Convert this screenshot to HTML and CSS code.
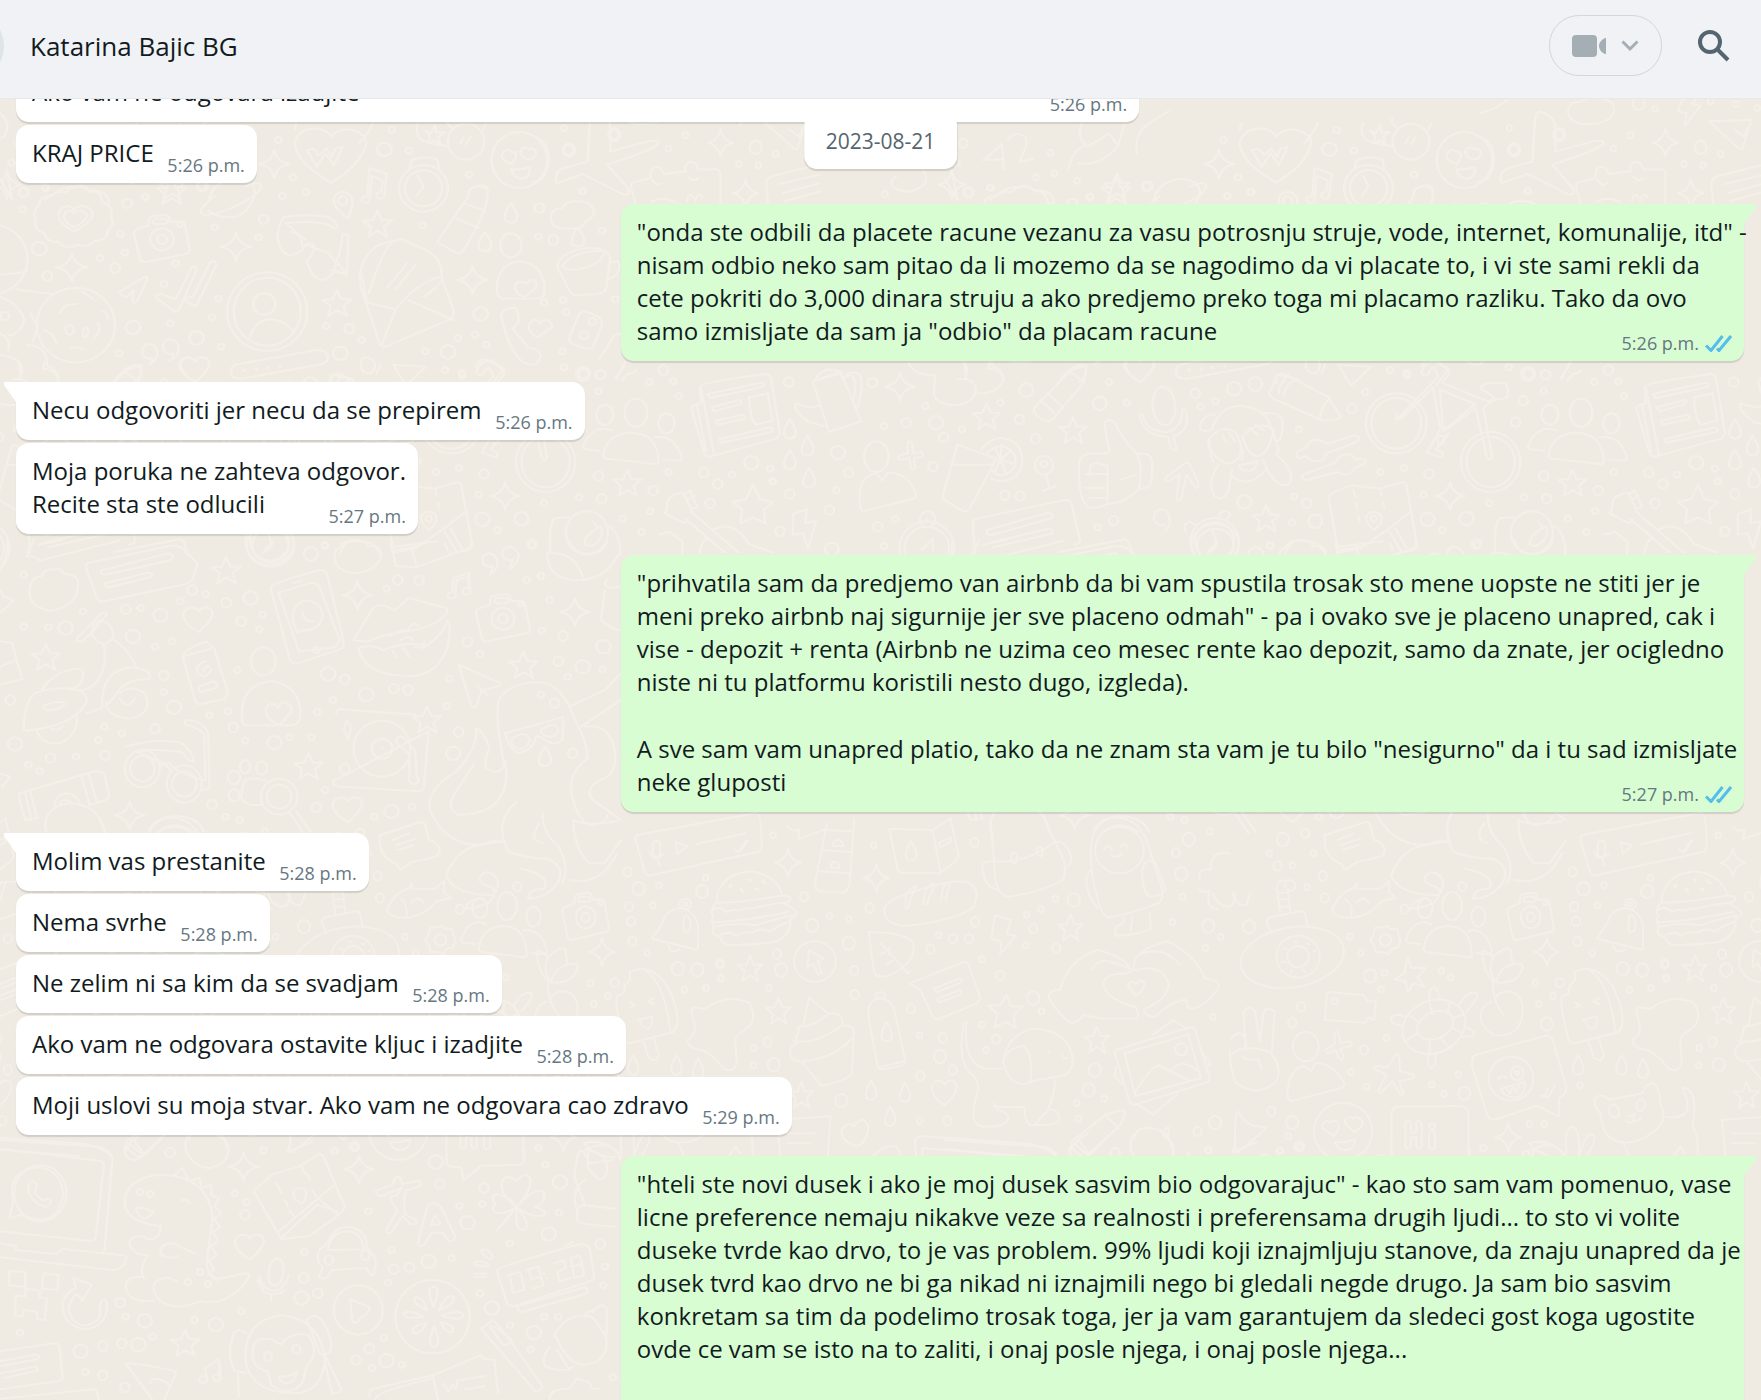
FILE: index.html
```html
<!DOCTYPE html>
<html lang="sr-Latn">
<head>
<meta charset="utf-8">
<meta name="viewport" content="width=device-width, initial-scale=1">
<title>Katarina Bajic BG</title>
<link rel="stylesheet" href="styles.css">
</head>
<body>
<header class="topbar">
  <span class="avatar"></span>
  <h1 class="contact">Katarina Bajic BG</h1>
  <button class="call" type="button" aria-label="Video call">
    <svg class="call-camera" viewBox="0 0 34 22" aria-hidden="true"><rect width="25" height="22" rx="4"/><path d="M34 3.500v15q0 1-1 .6-6-3.100-6-8.100t6-8.100q1-.4 1 .6z"/></svg>
    <svg class="call-arrow" viewBox="0 0 18 12" aria-hidden="true"><path d="M1.500 1.500 9 9l7.500-7.500"/></svg>
  </button>
  <button class="search" type="button" aria-label="Search">
    <svg viewBox="0 0 32 32" aria-hidden="true"><circle cx="12" cy="12" r="10"/><path d="m19 19 11 11"/></svg>
  </button>
</header>

<main class="chat">
  <svg class="wallpaper" aria-hidden="true">
    <defs>
      <g class="ink">
        <marker id="s" markerUnits="userSpaceOnUse" markerWidth="1" markerHeight="1" overflow="visible"><ellipse rx="8" ry="9"/></marker>
        <marker id="m" markerUnits="userSpaceOnUse" markerWidth="1" markerHeight="1" overflow="visible"><ellipse rx="12" ry="14"/></marker>
        <marker id="l" markerUnits="userSpaceOnUse" markerWidth="1" markerHeight="1" overflow="visible"><ellipse rx="18" ry="20"/></marker>
        <marker id="st" markerUnits="userSpaceOnUse" markerWidth="1" markerHeight="1" overflow="visible"><path d="M0-40 11-12 36-12 16 8 24 38 0 20-22 38-16 8-36-10-11-12z"/></marker>
        <marker id="sp" markerUnits="userSpaceOnUse" markerWidth="1" markerHeight="1" overflow="visible"><path d="M0-42Q6-6 38 0 6 6 0 42-6 6-38 0-6-6 0-42z"/></marker>
        <marker id="h" markerUnits="userSpaceOnUse" markerWidth="1" markerHeight="1" overflow="visible"><path d="M0-22C12-46 46-32 32-2Q24 18 0 40-34 18-38-6C-40-38-8-40 0-22z"/></marker>
        <marker id="dr" markerUnits="userSpaceOnUse" markerWidth="1" markerHeight="1" overflow="visible"><path d="M0-30Q16-4 16 10 14 28 0 28-16 26-15 10-14-6 0-30z"/></marker>
      </g>
      <g id="camera"><path d="M-62-30q-8 4-6 16l14 72q3 12 14 10l98-24q12-3 10-14l-12-74q-3-12-14-10l-20 2q-6-24-16-22l-30 5q-10 2-8 26z"/><ellipse rx="29" ry="33"/><ellipse rx="12" ry="14"/><rect x="-22" y="-62" width="36" height="16" rx="8"/><ellipse cx="44" cy="-44" rx="6" ry="7"/></g>
      <g id="people"><ellipse cx="0" cy="-82" rx="29" ry="42"/><path d="M-84 48Q-76-18-16-22 56-22 58 64q0 10-10 8l-122-16q-10-2-10-8z"/><ellipse cx="-80" cy="-76" rx="22" ry="30"/><ellipse cx="78" cy="-50" rx="21" ry="30"/><path d="M-62-28q-50-22-74 46 0 10 8 10l34 4M48-8q52-10 70 62 0 8-8 8l-38-2"/></g>
      <g id="smile"><ellipse rx="68" ry="84"/><path d="M-18-24c-12-16-32 4-22 20q6 10 22 16 10-18 10-28-2-10-10-8zM24-32c-10-14-26 0-20 16 6 10 16 14 26 14 8-8 14-20 8-28q-6-8-14-2zM-20 28q20 2 46-6 0 34-20 34-20-2-26-28z"/></g>
      <g id="plane"><path d="M-90 108q-8 2-6-16 2-24 26-30l52-18 6-126q4-30 20-20 30 14 30 50l0 66 100-32q22-4 16 12-8 10-60 34l-64 26 52 72q6 22-14 16l-98-60z"/></g>
      <g id="tile" class="ink">
        <!-- top left: medals, camera, planet, envelope -->
        <g transform="translate(0 100) scale(.408 .3333)">
          <path d="M182 260q25-10 38 14 30 0 30 32 32 14 22 42 12 24-8 44-2 32-32 30-16 24-42 12-26 18-46-8-32 2-36-28-28-12-20-38-12-28 8-42 0-34 32-30 18-28 54-28z"/>
          <path d="M182 330c14-24 50-10 44 20q-8 22-44 44-34-18-38-44c-2-30 26-42 38-20zM182 340c10-14 34-6 30 12q-6 16-30 30-22-12-26-30c0-20 18-26 26-12z"/>
          <use href="#camera" x="397" y="418"/>
          <path d="M512 300q10-60 72-64 46 10 40 50-20 66-60 66-40-2-52-20M526 288q-40 40-32 52 10 14 70-14 78-44 76-70-4-14-40 4"/>
          <path d="M812 248Q728 190 722 130c6-50 70-60 90-20 26-40 84-20 86 20q-14 66-86 118zM722 90l4-20M880 130q24-30 34-62M752 150l24 50 22-40 20 36 22-56-18 6-8 24-14-24-18 20-14-20z"/>
          <ellipse cx="1142" cy="125" rx="45" ry="54"/><path d="M1128 132l8-20M1142 134l12-24M1110 86q-20-20-14-30M1024 70q-8 30 8 50 30 14 64 18M1184 90l8-20M1042 90l14 10 10-26 4 24 20-2-16 16 6 20-16-12-14 10 4-20z"/>
          <ellipse cx="1038" cy="265" rx="60" ry="70"/><ellipse cx="1038" cy="265" rx="46" ry="54"/><path d="M1024 226l14 34-16 26M1004 206l4-24q26-16 64-4l4 26"/>
          <path d="M900 290a10 10 0 1 0 6 8l6-70 26 14-4 34a10 10 0 1 0 8 8l6-62-42-18z"/>
          <path d="M854 356q-34-30-36-52 0-28 22-28 26 2 24 36z"/><ellipse cx="840" cy="302" rx="11" ry="13"/>
          <path d="M1074 420l76-134q-6-20 20-28 30 4 26 24-4 60-60 168-6 14-18 8l-38-26q-10-4-6-12zM1118 356l56 28M1138 310l52 22M1170 258q6-6 26 4"/><use href="#smile" x="1273" y="180"/><use href="#plane" x="1458" y="140"/>
          <path d="M694 352q-12 26-14 60 8 50 32 54 26-4 38-34l18-2q6 26-16 52 10 54 40 58 26-10 32-50l-18-30-56-26M694 352q60-12 112 0 22 14 20 30-6 10-18-6-40-18-108-6l50 50M850 524l4-112q-2-12-14-10l-8 60-8 20zM712 396q30 6 28 40M810 510l38 12"/>
          <path d="M884 510q14-70 66-84l36-8 60 34q40 24 36 78l30 104q2 16-10 24l-152 80q-14 6-20-8l-46-170q-4-30 0-50zM884 510l16 98 70 20q50-80 112-98M970 628l-36 110M1000 600l110 60M904 580q30-120 56-152M950 562l48-72M968 570l52-78M1040 590q34-30 44-50"/>
          <ellipse cx="655" cy="635" rx="98" ry="118"/><ellipse cx="655" cy="635" rx="82" ry="102"/><ellipse cx="648" cy="612" rx="27" ry="32"/><path d="M612 714q10-52 50-56 36 4 56 34"/>
          <path d="M382 594l46 40q6 4 10-4l44-120q0-16-12-8l-40 96-30-14q-14-8-18 10zM456 604l24 16 50-124q0-18-14-10l-44 106q-18-8-16 12z"/>
          <path d="M294 574l62-44q6 0 4 10l-24 64q-6 10-12 0l4-34-18 22q-20-8-16-18z"/>
          <ellipse cx="186" cy="675" rx="96" ry="112"/><path d="M146 640q10-30 42-28M200 574q20 14 30 26M250 632q16 10 14 24M108 690q24 10 30 38M174 746q20-8 32 2M240 668q10 24-10 48M160 684q10-18 20-2 4 22-10 22-10-4-10-20zM204 694q2-16 12-8 0 20-8 26-8-6-4-18z"/>
          <ellipse cx="-30" cy="478" rx="98" ry="108"/><path d="M-20 522q50 4 86-8M40 568l86 14M0 590q46 20 60 70-8 40-38 46M74 640l18 40-12 46M0 700q30 20 20 50M0 764q60 10 54 56M66 736q50 0 50 62 26 10 28 40"/><ellipse cx="12" cy="648" rx="11" ry="12"/>
          <path d="M366 732a18 22 0 1 0 8 42q0 16-8 18 18-6 20-34-2-22-20-26zM416 718a18 22 0 1 0 8 42q0 16-8 22 22-10 22-38-2-22-22-26z"/>
          <path d="M576 794l200-44q24-2 28 20 0 16-14 22l-196 44q-26 2-28-18 0-18 10-24z"/><path d="M598 810v1M628 806v1M656 802v1M686 798v1" class="thick"/>
          <path d="M888 776a20 24 0 1 1 20 44q-22 0-24-24zM964 794l80 6-48 56-12-20zM1166 800q12-30 30-18l38 24-30 50M278 850q30-60 64-54 12 26-12 50M812 850v-26l54 14"/>
          <path d="M1350 358q0-34 28-34 10-24 34-20 36-4 44 30-2 20-20 30-8 24-34 22-48 4-52-28zM1366 502q0-40 62-56 56-10 68 26l-10 90q-4 20-24 20l-40 4q-24 2-28-18zM1378 500q24-50 106-48-14 44-60 54-30 8-46-6M1498 490q18-14 20 4 4 30-28 44"/>
          <ellipse cx="1252" cy="436" rx="26" ry="36"/><path d="M1218 576q-2-86 56-92 60 10 60 82 4 34-26 30h-70q-18 0-20-20zM1290 550c10-20 30-6 24 12l-26 28q-24-6-26-28 4-26 28-12"/>
          <path d="M1228 650q2-28 34-26 12 14 8 44l-14 18 40 58q24 2 30 20-2 22-18 30-50 6-80-144zM1324 672c10-24 32-8 28 10l-34 30q-22-10-22-34c6-24 22-24 28-6zM1396 710l24-68q10-12 20-6l26 14q12 10 8 30l-20 60q-8 10-20 6l-30-14q-10-8-8-22zM1470 776l36-70q12-10 20 4M1512 836l20-50"/><ellipse cx="1432" cy="706" rx="10" ry="12"/><ellipse cx="1452" cy="664" rx="9" ry="11"/>
          <path d="M0 40q30 30 10 70l-10 4M0 236l30 64-14-90"/>
          <polyline class="dots-s" points="56,328 112,264 355,292 295,402 245,474 306,458 430,490 526,382 634,412 536,596 520,652 418,670 292,760 402,552 542,740 692,288 750,276 682,120 718,232 1002,152 960,90 1150,224 1036,376 800,678 886,720 1042,754 1122,714 1164,704 1192,734 1132,820 1320,410 1382,802 1378,754 1388,636 1508,598 1476,392 1428,274 1334,608 1380,600 28,188"/>
          <polyline class="dots-m" points="58,276 282,504 116,528 646,358 312,310 1322,324 1356,420 1504,104 1394,150 1472,824 1430,822 856,686 497,258"/>
          <polyline class="dots-l" points="96,446 942,148 326,682 482,714 834,760 1178,642 1098,756"/>
          <polyline class="stars" points="925,372 826,610 420,274"/><polyline class="sparks" points="578,440 1158,540 672,192 176,502"/><polyline class="hearts" points="478,806"/><polyline class="drops" points="1252,340 1188,426 1416,412"/>
        </g>
        <!-- top right: luggage, flowers -->
        <g transform="translate(535 0) scale(.3333)">
          <path d="M264 336q4-34 36-30 24-20 70-10 40 10 30 46-20 30-70 30-60 4-66-36zM608 296l-14 38 26 6-6 36 48-58-26-6 20-22zM686 364l128-4-26 86q-6 4-10 0zM762 388l30 22 10-26M304 620l-16-60q-2-10 10-14l50-12q-4-30 14-34 20 0 24 22l66-8q-4-26 14-28 20 0 22 22l56 0q12 2 12 14v90M352 540q14 24 30 8M460 530q16 20 30 4M350 606q30-20 70 0M456 604l4-16q10-10 16 6M480 604l6-16q10-10 16 4M700 620l-6-66q0-20 20-26l136-34M734 552l120-28M744 580l110-30M750 604l106-30M0 410q44 16 42 76-10 60-50 60M0 340q60-16 90-50"/>
          <polyline class="dots-s" points="88,384 400,446 452,406 612,492 670,496 722,462 526,326 692,304 768,312 144,574 832,324"/><polyline class="dots-l" points="238,404 102,450 662,442 476,310"/><polyline class="sparks" points="556,428 632,580"/>
        </g>
        <g transform="translate(600 80) scale(.357 .3333)">
          <path d="M1076 240l50-48 4 60v16M1072 240l60-2M1142 180q20-30 50-10 10 20-18 76l40-10M1312 270q10-60 50-76-30-20-10-70M1340 250q60 10 110-50l20-70M1366 200l60-40 20 30M1504 220q-10-60 34-90l60-40M830 290q-20 10-10 30 40 30 80 0 26-20 4-50M1092 360q30-30 60-24 30-30 60-6 60 0 60 40"/>
          <polyline class="dots-s" points="1222,292 1262,218 1336,302 1092,322 1374,350 1272,280 798,342"/><polyline class="dots-m" points="1018,190 1032,338 1530,320"/><polyline class="stars" points="1448,320"/><polyline class="sparks" points="986,314"/>
        </g>
        <!-- band of hobbies: bicycle, monkey, map, guitar -->
        <g transform="translate(205 350) scale(.3897 .3333)">
          <ellipse cx="632" cy="220" rx="78" ry="90"/><ellipse cx="632" cy="220" rx="64" ry="76"/><ellipse cx="874" cy="336" rx="76" ry="90"/><ellipse cx="874" cy="336" rx="62" ry="76"/>
          <path d="M632 210l108-130-10-28q-12 4-16 20-14 8-18-8 8-30 40-34l32 34q4 10-20 34l120 56 16-8q-10-14-36-30 2-14 20-16h44q12 16 4 42-12 6-26 6-26 10-34 28l22 146q-8 14-14 0l-28-148-70 60-22-4-18-118-80 92q-16 6-14-14zM744 118l90 44-82 82z"/><path d="M744 240l-34 68 38 14 4-12-18-12 34-50M740 260q20-10 12 20-18 8-12-20"/>
          <path d="M324 80q8-12 20-8l112 68 34 60q-4 14-50 10l-120-62q-20-14-10-28zM344 136q4-40 32-46M330 130q4-36 26-56M436 204q4-40 26-58"/>
          <path d="M158 240q20-74 76-72 60 6 76 60l20 70q0 10-6 16 50 50 34 86-24 20-54-34l-14-36M158 240q-40 10-26-24 12-24 34-22M286 190q60-8 54 42-2 40-16 42M150 268q40-50 70-20 20 40 10 70-20 36-48 14-30-20-32-64zM238 258q44-54 80-16-20 84-46 76-26-10-34-60zM186 256l10 20M204 250l14 24M254 234l24 20M270 222l24 20M152 270l-4 6 14 60M176 344q-30 50-12 92 24 24 38-16l8-60M210 378q46 40 86-18M230 344q30-2 46-12-4 32-26 30-20 0-20-18M240 300l-4 30"/>
          <path d="M378 304q26-8 30-26 20-20 46 4l70-26q14 0 12 14-10 10-66 32-20 4-24 26-30 14-46-10-24 12-24 0 0-10 2-14zM392 374l84-36q10-30 40-24 10 10 12 14 28-4 26 8-4 10-26 16-20 34-46 14l-80 24q-16-2-10-16z"/>
          <path d="M458 442q0-12 58-36l74 10 58-20q8 0 10 10l28 182q-2 8-10 12l-50 12M458 442l26 166 54-12 70-56 60-54M490 600l56-10M614 544l30 58M630 536l28 58M522 420l4 20M528 458l4 16M590 416l4 20M598 458l4 16M534 500l4 16M616 580l6 20M574 540q-22-24-20-40 14-24 36-8 14 24-16 48"/><ellipse cx="574" cy="506" rx="8" ry="9"/>
          <ellipse cx="36" cy="168" rx="29" ry="58" transform="rotate(-4 36 168)"/><path d="M-18 196q8 50 62 50 40-14 38-64 4-8 10 0 14 60-32 76l8 36q-4 14-14 0l-8-34q-60 0-72-58 0-14 8-6"/>
          <path d="M68 448q6 8 12-4l14-70 24 40q10-4 4-20l-20-52q-8-8-16 0l-44 40q-8 10 6 12l28-20z"/>
          <ellipse cx="166" cy="574" rx="62" ry="70"/><ellipse cx="166" cy="574" rx="50" ry="58"/><path d="M160 540l10 36-22 34M178 496q10-24 28-4l-8 14M92 546q-10-24 10-32l14 10M30 478a20 24 0 1 0 8 46M30 478q24 4 20 46l-10 18M348 610q10-40 40-40l40 10 20 28"/>
          <use href="#people" x="1106" y="270"/>
          <path d="M1270 110q0-12 170-38 8 0 12 10l24 170-10 14-170 54q-10 0-14-10l-34-134q2-12 24-16zM1272 110l34 204M1262 164l24 140M1290 132l138-34q10 2 4 12l-136 34zM1300 172l72-22q8 4 2 12l-66 22zM1310 212l70-18q8 4 4 12l-68 18zM1320 268l130-36q10 4 4 14l-130 32zM1396 142l48-12 12 82-42 12q-14-10-18-82z"/>
          <path d="M1186 474q-4-40 40-46 12 20 24 60l120 120M1232 506l100 100M1232 430l12-8 20 50-14 4M1240 446l16-8M1186 474l-6 16 50 30 8-10M1270 610q0-30 18-46M1306 538q50-30 90 44l60 26M1164 554l30-8 32 30-2 36M886 610q-4-100 14-106l34-2M1036 528q30 20 30 84M974 582q0-30 42-52 10 30-16 52-14 12-26 0M996 514l10 16"/><ellipse cx="980" cy="548" rx="54" ry="64"/>
          <path d="M1052 86l24-40M1070 92l16-20q12 0 20-10M440 72l10-30"/>
          <polyline class="dots-s" points="168,154 130,170 382,238 592,366 652,354 660,76 616,60 552,126 370,440 364,518 308,588 702,434 870,460 960,442 1072,506 1120,546 1140,96 1202,94 1216,138 1190,366 1352,374 1010,124 750,540 1142,484 1450,356 1456,394"/>
          <polyline class="dots-m" points="116,130 402,460 518,176 716,372 838,582 958,152 938,216 1018,446 1010,378 1150,422 1280,368 1316,402 1296,460 1176,60 1498,96"/>
          <polyline class="dots-l" points="216,116 270,102 242,456 424,514 712,508 812,506 970,72 1402,338"/>
          <polyline class="stars" points="298,506 1084,400"/><polyline class="sparks" points="770,438"/><path d="M1406 404l18 44 34 8-24 24 4 40-32-18-32 18 4-42-24-22 34-8z"/>
        </g>
        <g transform="translate(600 350) scale(.3827 .3333)">
          <path d="M558 96l14-24 22-14 34 6 6 22q20-30 44-12 14 30-6 100M636 86q20-20 28 0 8 30-4 66M556 94l42 152 84-32-54-150zM556 94l76-24M570 168q-24 8-58-8-10 20 34 56l40 12"/>
          <path d="M806 40q20 40 70 34l-4 60q10 30 56 32 52-6 54-48-4-36-46-30M952 40l4 48M990 130q56 0 64-44-10-30-40-30l4-20"/>
          <path d="M1272 48l-8 50-78 106q-16 20-40-4-20-16-8-30l90-106q10-8 44-16zM1228 66l38 30M1168 128l38 40M1150 150l36 38"/>
          <ellipse cx="722" cy="320" rx="32" ry="46"/><path d="M680 470q-10-90 42-100l16 22 14-24q56 0 74 66 0 10-12 14l-120 34q-12 2-14-12zM804 278q8-10 12 4l2 28 22-4q10 8 0 14l-20 4 4 30q-6 10-12 0l-4-30-24 6q-10-8 0-14l20-6z"/>
          <path d="M934 284l102 42-70 150q-8 12-20 6l-48-34q-6-10 0-20zM920 344h106M996 298q44-60 94-14 28 50-2 92-26 28-66 10M1012 308q40-40 70 4 14 40-20 60-30 10-40-16M1046 328l-14-36M1046 328l4-44M1046 328l28-26M1046 328l36 14M1046 328l14 40M1046 328l-14 36"/>
          <ellipse cx="1160" cy="346" rx="24" ry="28"/><ellipse cx="1160" cy="342" rx="9" ry="10"/><path d="M1166 374l8 42M1158 422l34-14"/>
          <path d="M1318 220q12-20 28 0 20 50 58 92 34-8 38 22 4 60-10 78l-26 6q-30 40-80 44-46 24-58 0-20-30-16-130 10-24 44-22 44 6 32-20zM1320 346q-30-12-38 0l-4 30M1322 372h-52M1320 414h-52M1320 444h-40M1362 388l40-14M1404 312q16 50 4 106M1326 342v112"/>
          <path d="M980 610l-6-90q0-10 10-14l230-56q14-2 18 10l22 110q0 12-14 14M1010 540l162-52q14 4 10 16l-160 52q-14-4-12-16zM1024 576l150-40q14 6 4 16l-150 40M1200 606l170-38q14 0 20 42M504 492l36-14-4 42 28-6-20 82-14-46-26 4z"/>
          <ellipse cx="854" cy="594" rx="72" ry="80"/><ellipse cx="854" cy="594" rx="58" ry="64"/><ellipse cx="856" cy="508" rx="20" ry="24"/><path d="M840 600l30-34v34M854 508v1"/>
          <polyline class="dots-s" points="850,168 946,238 1046,158 742,228 618,420 452,394 772,508 742,588 1330,96 1376,158 1300,532"/><polyline class="dots-m" points="800,218 898,262 1096,208 1138,266 870,350 650,368 496,432 600,480 726,530 1342,512 1098,438 712,98 470,544 1058,436"/><polyline class="dots-l" points="1114,120 1306,160 622,308 878,218 606,598"/><polyline class="stars" points="1010,200 1236,242"/><polyline class="sparks" points="784,110"/><polyline class="drops" points="496,238 542,288 496,330 546,384"/><polyline class="hearts" points="1412,56"/>
        </g>
        <!-- middle left: phone, scooter, record player, octopus -->
        <g transform="translate(0 540) scale(.3954 .3333)">
          <path d="M220 70l200-50q30-8 46 10l34 40-14 50q-10 14-40 18l-182 46q-14 4-18-8l-28-90q-2-12 2-16zM256 92l168-52q14 0 14 12-4 8-12 10l-160 42q-14 0-10-12zM266 130l108-32q14 0 10 12l-106 32q-14 0-12-12zM66 50l20-50M66 50q20-6 34 12l200-60M96 14l60-14"/>
          <path d="M78 130q6-20 26-20 8-26 34-22 18-4 24 14 34 0 36 28-2 74-72 82-66-16-48-82z"/>
          <ellipse cx="684" cy="16" rx="60" ry="64"/><ellipse cx="684" cy="16" rx="46" ry="50"/><path d="M686 0q8 20-14 34"/>
          <path d="M686 140q0-10 122-50 12-2 18 8l44 210q0 16-10 20l-108 42q-12 4-18-8l-48-210zM704 158l86-30 16 8 54 166-14 20-90 12-52-176M742 128l22-6M752 278q-30-72 16-96 44-2 48 46-6 44-54 44zM764 218q10 34 30 24"/><ellipse cx="800" cy="330" rx="8" ry="9"/>
          <path d="M846 46q0-20 14-22 12-30 44-20 24-8 26 16 30-8 34 22-6 50-66 58-54-8-52-54zM988 12l14 66 50 4 140-60v-22M996 20l110-16M1040 20l14 60"/>
          <path d="M894 300l50-96q20-20 54 8l36-38 94 30q6 10 0 18-30 40-90 50-70 10-100 30-24 4-44-2zM906 324q40-14 62 8 60-32 110-14 40-30 54-76 10 10 0 80-30 90-100 86-110 0-126-84zM984 288l30-18 16 4 14-24 14 6M992 330l12 20M1020 324l16 26M1050 320l24 4-2-20M1014 300q20-16 30 0"/>
          <use href="#camera" x="1272" y="236"/>
          <path d="M1144 156a10 10 0 1 0 8 8l2-42 30-12 2 36a10 10 0 1 0 4 6l-4-54-40 18zM1240 40a18 20 0 1 0 6 38l-6 26q20-16 18-40-4-20-18-24zM1290 20a18 20 0 1 0 6 38l-6 28q20-16 22-40-4-20-22-26zM1384 40q0 70 60 80 80 6 110-60l14-20M1384 40q66-10 90 70M1440 0q6 40 50 44 40-10 46-44M1568 140q-50 10-34-20M1530 150l-10 90q30 30 50 30"/>
          <path d="M196 304q-4-10 6-18l54-66q10-8 14 4l-40 56-24 26zM236 258q10-20 26-14 26 10 24 50l-16 16q-20 8-40-30zM262 312q10 80-20 116-20 30-60 20M288 300q40 30 58 84M106 450q30-60 94-64 20 10 0 50l-24 14M60 568q0-80 30-110 60-20 100-10 34 10 28 40-30 70-150 84zM258 500q-4-110 76-118 52 6 44 36-60-2-82 40-20 40-38 42zM302 460q30-30 66 2 20 60-40 74-60-6-60-50M302 474q20 40 40 0M94 574q10 40 54 36 50-20 46-80M128 566q20 10 32-8M110 502q10-18 50-16 10 12-20 22-26 8-30-6M218 520l40-16"/>
          <path d="M462 350q0-20 60-46l20 22 34 130-6 20-60 16q-12 2-16-8zM462 350l72-24M520 364q-28 10-20 36 20 20 34-10-8-24-20 4M504 440l36-16q10 4 8 18l-36 14q-14-2-8-16z"/>
          <ellipse cx="666" cy="364" rx="31" ry="42"/><path d="M612 540q-6-110 76-116 74 14 72 104-2 26-24 28l-112 0q-12-4-12-16zM702 504c14-34 40-10 34 14l-28 36q-34-12-36-42c2-24 24-26 30-8z"/>
          <path d="M850 520q0-12 12-12l190 16M1084 574l-12 168q-2 12-14 12l-200-14q-16-2-16-16zM1004 610q-6-24 14-20l32 40 4 80q14 20-10 22-16-8-8-26l-2-64z"/><ellipse cx="966" cy="626" rx="72" ry="84"/><ellipse cx="966" cy="626" rx="26" ry="30"/><path d="M966 624v2M870 566l8-26 10 24-8 34z"/>
          <path d="M1160 374l102 54q6 6 0 10l-44 14-14 48q-6 6-12-2zM1206 436l28 30"/>
          <path d="M318 620q80-28 140-12 30 26 32 56-12 4-28-26-50-14-118-4l62 32q10 6 24 4 10 26 90 52l-4-140q-20-24-46-26-8-20 10-16 40 10 46 40l4 160q-4 12-20 10"/><ellipse cx="360" cy="686" rx="44" ry="56"/><ellipse cx="360" cy="686" rx="31" ry="38"/><ellipse cx="466" cy="732" rx="44" ry="56"/><ellipse cx="466" cy="732" rx="31" ry="38"/><path d="M404 674q20-2 28 20"/>
          <path d="M50 760l190-66q20 0 24 10l12 60q0 14-10 16l-40 16M50 760q-6 10 14 80l34-6M206 708l20 84M224 702l20 80M76 754l18 80M64 760l16 80M114 870q-4-70 60-80 80 4 90 86M138 800q0-30 24-40 30 0 40 30M150 790q14-20 32 0M376 870q20-40 70-42 56 4 70 48M400 876q40-40 90 0"/>
          <ellipse cx="706" cy="770" rx="46" ry="54"/><ellipse cx="706" cy="770" rx="31" ry="36"/><path d="M672 722q-40-14-56 4l-6 40q0 34 50 28M734 820l34 60M750 816l36 60"/><ellipse cx="620" cy="680" rx="13" ry="20"/><ellipse cx="662" cy="684" rx="14" ry="20"/><ellipse cx="592" cy="712" rx="16" ry="20"/><ellipse cx="592" cy="766" rx="14" ry="18"/>
          <path d="M1276 680q-30-180-10-210 30-44 100-44 60 10 90 120 30 60 30 110-50 40-40 110 20 90 50 90 40-10 40-30M1278 580l144-48q6 10 0 66-20 26-54-6l-12-4q-10 50-50 50-18-12-28-58zM1294 596q40-30 46 6-10 30-34 24-14-10-12-30zM1368 570q36-30 44 0-2 20-22 20-20-2-22-20zM1440 500l90-50 40-50M1470 560l100-80M1480 560q70-10 76 90 0 60-40 70-40 30-16 60l70 60M1204 564q20 10 34 60-12 30-10 60 40 30 50-20 20 160-120 160-30-20-10-60l50-90M1204 564q6 60-50 130-80 60-66 120 40 100 120 100l70-10M1306 786q-60 60-20 150 50 20 100 20 50 30 20 80-30 40-70 40 0-30 40-30 20-40-60-60M1278 906q-30-10-60 10-60 4-90 90 20 60 120 60 30-60-20-70-30 20 0 40 40 10 10 50-30 20-60 20 0-20 30-30M1372 820q0 60 40 100 30 60 10 110M1450 840q0 80 40 130h40l40-70M1450 840q30 20 110 4M1364 850q-30 50 10 60M1440 1020q80 20 120-80"/>
          <path d="M960 886l104-40q10 0 12 12l8 40q40 20 22 50l-36 12q-30 0-56 30l-14-20q-40-20-40-70zM994 900l40-20M1000 916l50-20M1006 930l40-14"/>
          <path d="M678 1060q10 40 40 40 20-10 10-40M732 1060q0 40 30 34l10-34"/>
          <path d="M0 304l30 4 26 110-56 16M0 380l40-20 14 40M0 90q20-30 18-90M0 150l10 20 24 10-24 30-10 8M0 700l26 10-20 30"/>
          <polyline class="dots-s" points="60,104 60,260 122,262 210,214 356,204 520,162 456,184 392,320 434,304 600,390 656,268 664,224 530,526 576,514 414,456 264,560 248,600 308,580 72,674 100,694 192,650 620,602 732,592 788,592 802,516 842,480 570,830 606,840 822,750 946,830 1042,800 978,146 1136,416 1214,342 1390,180 1370,272 1436,410 1524,388 1332,120 1368,108 1368,464 822,16 1346,14 1130,498"/>
          <polyline class="dots-m" points="318,208 486,150 572,188 610,244 26,480 414,406 392,566 590,562 128,654 266,646 536,794 800,802 872,686 872,418 996,446 1032,450 1060,122 1006,120 1182,306 1412,364 1424,288 1160,576 1402,490 1448,640"/>
          <polyline class="dots-l" points="166,264 336,290 406,226 634,174 440,502 38,612 694,608 830,402 926,464 990,814 786,42 1146,640 1474,380 1526,320"/>
          <polyline class="stars" points="116,352 572,92 1080,540 780,680 1324,376"/><polyline class="sparks" points="904,166 1454,216 328,826"/><polyline class="hearts" points="502,236 880,806"/><polyline class="drops" points="1378,650"/>
        </g>
        <!-- middle right: turtle, emoji card, cat, ice cream -->
        <g transform="translate(285 820) scale(.3386 .3333)">
          <path d="M1034 56q0-10 10-12l350-66q12 0 14 100-2 16-12 18l-316 70q-14 2-18-12zM1216 72l144-32M1154 66l34 12-28 24zM1326 88l14 8 20-34M1346 92l20-30M1078 96q8 34 40 6M1100 116l6 20"/><rect x="1086" y="62" width="22" height="48" rx="11"/>
          <ellipse cx="184" cy="412" rx="154" ry="90" transform="rotate(-10 184 412)"/><ellipse cx="201" cy="410" rx="64" ry="63"/><ellipse cx="201" cy="410" rx="32" ry="32"/><path d="M122 340l-14-34q0-10 10-14l90-18q12 0 14 8l8 40M148 278l-10-76q2-24 28-20 30-6 26 22-12 16-22 2l8 68M142 218h30M144 238h30M146 260h30M166 182l-4 20M190 366h8M226 372h8M160 386h8M154 426h8M184 450l-6 10M216 450l6 8M246 392h6"/>
          <path d="M302 268q20-50 64-64l8-14v16h70l26-24 0 34 20 18-40 8q-50 60-118 50-30-6-30-24zM340 234q26 24 18 54M374 248q20-24 36 0"/>
          <path d="M452 322q12-10 20 4l22 2 4 18 6 16-8 20-18 4-10 18-18-8-20 0-4-20-12-14 10-18 4-20z"/><ellipse cx="459" cy="360" rx="17" ry="17"/><use href="#people" x="656" y="340"/><use href="#camera" x="888" y="292"/>
          <path d="M1086 350q20-20 36-60 20-30 58-24 40 20 40 60v56q-2 10-10 6l-120-30q-8-4-4-8zM1132 376q8 30 34 12M1178 300q0-20 12-12 14 20 4 44-16 10-18-6z"/><ellipse cx="1182" cy="252" rx="17" ry="16"/><ellipse cx="1182" cy="252" rx="6" ry="6"/>
          <path d="M280 600l6-76q2-8 10-8l98 10 12 18 24 0-4 56-16-8-10 16-110-8z"/><ellipse cx="310" cy="544" rx="9" ry="9"/>
          <path d="M524 410l12 34 42 0-24 28 20 28-34-10-14 28-8-34-32-6 30-20z"/>
          <ellipse cx="602" cy="620" rx="96" ry="78" transform="rotate(-26 602 620)"/><ellipse cx="606" cy="616" rx="56" ry="40" transform="rotate(-26 606 616)"/><path d="M588 542q0-40 14-40 16 4 14 36M676 556q20-40 50-38 14 10-28 56M520 592q-30-16-44 2 0 20 36 24M586 704q-4 40 10 40 14-8 12-44M692 620l30 14q0 20-36 16M590 550l8 32M650 544l-6 30M690 582l-34 14M656 622l26 16M622 652l28 34M590 656v46M558 638l-38 24M532 588l28 22"/>
          <path d="M744 396q0-12 34 14 40-34 50-22l6 44q34-4 30 10-10 50-76 46-40-20-44-92zM778 410q-20 40 6 72M834 434q-40 10-48 52M776 480q0 70 32 104M772 544q-40 20-30 60 20 46 66 42 60-10 56-90-10-44-50-42-36 10-30 34"/>
          <path d="M1018 456q60-30 110 40 50 100 20 140l-130 34q-14 0-18-10-30-120-18-134 24 0 20-26l18-22zM1062 450q60 40 76 184M1060 668l14 44q20 20 30-6l-14-48M1018 548l16 8-12 8M1090 534l-16 10 16 8M1042 600l42-10q4 34-16 36-16-4-20-28"/>
          <path d="M1200 570q0-14 40-2 60-50 130-20 30 50-10 80-34 20-30 40l4 60q-8 30-36 20-50-60-80-60-34-10-28-30 30-20 18-50z"/>
          <path d="M46 690l-6-110q10-30 34-6l14 90 12-90q10-14 32 0l-8 118M0 660q30-40 46 0l4 30M8 700q30-30 110-4 40 50 18 90-60 50-120 0-16-40-16-90M36 710q10 12 48 8l10 30"/>
          <ellipse cx="224" cy="680" rx="38" ry="44"/><path d="M170 830q0-80 46-92l24 14 12-22q50-4 86 60 0 12-10 14l-140 38q-16 2-18-12zM308 640q10-12 14 4l4 24 30-4q8 10 0 14l-30 8 10 26q-8 14-16 0l-8-22-24 10q-12-8-2-14l24-14z"/>
          <path d="M492 700q10 0 10 54l40 10q4 10-6 12l-36 8 12 36q-8 8-12 0l-20-36-34 34q-14-2-4-14l20-40-34-16q-6-10 8-10l30 4z"/>
          <path d="M716 720q0-12 12-16l200-56q20-4 26 14l40 140q0 20-22 34l0 54-66-32-120 40q-20 4-26-12l-46-150z"/><ellipse cx="830" cy="776" rx="66" ry="66"/><ellipse cx="848" cy="760" rx="19" ry="21"/><path d="M792 778q8-16 24-4M800 806l70-20q4 50-40 46-20-4-30-26M816 804l10 18 10-22 10 18 8-24M918 826l8 6 14-28M932 828l8 4 20-36"/><ellipse cx="848" cy="758" rx="6" ry="6"/>
          <ellipse cx="334" cy="934" rx="86" ry="86"/><path d="M298 908c-10-10-30 0-26 16l34 24q16-16 16-32c-6-20-22-14-24-8zM362 896c-8-10-26-2-22 14l26 26q22-10 26-26c-2-20-26-20-30-14zM310 966q30 4 60-8-2 32-32 32-24-4-28-24M476 1020l2-140q0-20 20-20l180-2q24 0 26 22v140M16 990q-4-100 6-116 20 34 48 44l36 4q0 10-86 76z"/>
          <path d="M518 910q0-8 8-8 8 0 8 8v28h16v-28q4-16 16 0v70q-6 12-16 0v-28h-16v28q-8 12-16 0zM588 940q10-14 18 0v42q-8 12-18 0z"/><ellipse cx="597" cy="918" rx="9" ry="8"/>
          <path d="M1094 880q-30-40-10-50 24-8 34 10l100-20q10-34 34-30 20 20 18 60 40 70-70 114-100 20-106-84zM1118 866q10-20 26-6 14 24-4 34-20-4-22-28zM1202 846q18-20 26 8-10 24-22 18-10-10-4-26M1176 890l20-8-6 22q-10 8-20 0M1190 900q10 12 24-8M1282 890q60 10 70-24 0-40-16-54 0-14 16-4 30 20 14 110 20 30 14 100M1162 970l20 44M1310 1010l20-30 14 20M884 970q60-20 110 40-70 10-110-40M994 1000q-10-80 20-80 20 10 16 90M1034 1000q20-70 40-54 10 14-20 60"/>
          <polyline class="dots-s" points="246,100 116,100 184,136 228,202 354,350 386,398 456,458 446,508 624,452 652,472 902,490 954,528 912,552 1070,398 1086,256 1104,196 1242,174 1288,476 1180,510 1244,504 1034,796 884,912 928,912 674,764 596,794 632,822 404,800 358,756 462,654 748,984 172,948 206,980 148,992"/>
          <polyline class="dots-m" points="140,138 274,168 280,234 516,268 686,200 1012,156 1016,260 1022,304 1026,364 974,488 1284,432 210,560 184,608 396,690 122,874 222,40"/>
          <polyline class="dots-l" points="156,58 56,320 414,468 936,612 1044,206 1232,214 1160,446 1218,450 692,820 184,908"/>
          <polyline class="sparks" points="936,396 822,952"/><polyline class="drops" points="1028,736 1156,736 1220,746"/>
        </g>
        <g transform="translate(700 820) scale(.338 .3333)">
          <path d="M48 248q4-84 100-94 80 10 96 74 20-4 24 8-4 12-20 14l24 14q30 20-4 32v14q-4 40-50 56-60 8-130 10-24-4-28-24-30-10-20-26 0-20-6-24 10-16 0-20 0-20 14-34zM48 248q80 0 196-22M36 270q30-14 40 6 20-10 40-4 20-8 44-8 40-10 84-16M40 306q80 0 220-30M44 320q60-14 120-4 60-20 110-30M62 344q30-14 44 4 20-14 50-10 20-16 50-4 30-20 60-30"/><path d="M92 196l-4 4M148 178v6M122 208l4 6M184 182l8 6M166 206l6 4" class="thick"/>
          <path d="M260 20q20 20 34 8l-4 30 80-30M376 10l-36 180q2 20 14 24l74 4 14-20 14-200M374 30l76 4M364 90l80 6M350 154l94 6"/><path d="M394 78v-10q12-18 28 0l2 10zM388 144v-12q14-16 24 4v8z"/>
          <path d="M560 26l24 120q4 12 14 12l112 2 50-40q8-10 4-20l-22-100M560 26l128 4 56-36M688 30l24 128M708 68l34-16v14l-32 16z"/>
          <path d="M544 270q4-30 90-56 120-40 160-26 40 20 14 74-50 40-200 56-60-4-64-48zM610 268q-10-60 30-70M616 264q10-40 20-60M662 254q0-60 30-64M672 254q10-40 26-60M714 242q0-40 18-56M726 240l14-50"/>
          <path d="M860 0l14 180q10 50 40 50 100-14 160-50 10-20 2-60L1020 0M864 124q100 8 180-54M864 124q-40 0-26 30 4 50 44 54M1042 70q36-20 56 40 0 30-16 30M920 106q10-20 18 0l-4 24q-14 4-14-24zM994 90q8-20 20 0l-2 18q-14 4-18-18z"/>
          <ellipse cx="1241" cy="90" rx="72" ry="70"/><path d="M1156 100q0-90 60-106 80-10 110 80l40 130q10 40-20 50-100 36-140 38-20-10-30-60-20-60-20-132zM1158 150q-30 20 0 90l20 24M1308 150q10-40 40-22l30 80q-10 20-50 22-20-20-20-80zM1196 88q14-20 24 2M1244 80q10-16 22 4M1216 106q20 10 32-4M1254 292q4 20-20 26-14 20 0 30 60-4 100-20l-4-50M1280 290l-6 40"/>
          <path d="M500 336q100 0 130 30 14 50-50 90-30 20-60 10-10-20-20-130zM534 370q40 40 80 90l8-8M548 396l-14 6M560 404v-24M570 422l-18 10"/>
          <ellipse cx="340" cy="424" rx="62" ry="61"/><path d="M322 390l44 26-18 8 12 34-10 6-16-34-16 12z"/>
          <path d="M620 490l160-64q10-2 14 8l36 100-10 16-116 48q-12 2-16-10l-36-78zM692 506l78-32q10 6 2 14l-72 28zM702 536l68-26q8 6 0 14l-64 24z"/>
          <path d="M322 532l60 50q40-10 40 34 40 0 32 32l-4 110q-4 20-90 40l-60-74q-30 0-34-24 0-24 22-30-8-20 4-34-6-14 14-20zM290 620q50 0 84-34M276 664q70 10 144-48M304 722q80 0 144-64"/>
          <path d="M500 600q-10-60 34-66 40 10 44 50l30 142q0 14-72 22l-10-6zM520 532q0-16 14-16 16 0 12 20M528 742l78-18"/>
          <path d="M780 610q-20 110 20 150 30 20 20 60-30 100 20 100 60 4 70-20 10-20-30-30l-10-20M788 606q-10 130 60 140h44M900 710q10-60 80-84 80 0 110 50 30 60-10 90l-110 20M896 724q10-40 60-46 30 20 22 110-60 20-80-60M1050 780q0 40-20 90l-40 44q60 4 70-10 10-34-30-36M870 860l90 2q0 60 30 54M1030 698h4M1070 704q0 14 16 10"/>
          <path d="M1066 510q20-90 110-120 80 20 100 60-8 14-46 12-50 10-30 50 20 30 90 50 10 20 4 34h-100l-60-10q-20 30-44 20-60-60-58-80 10-20 34-16M1160 446q20-30 50-22l60 20M1284 450q-10-60 100-86 80 40 110 110 50 10 40 30-50 70-90 60l-6-24q-40 0-90 50-30 0-36-20 80-40 74-80-20-60-96-40M1300 404q70-30 120 30M1290 526q-20-20-24-30 10-20 24-4 16-20 26 0-6 24-26 34z"/>
          <path d="M1230 690l220-68q12-2 16 10l42 142q0 10-10 14l-210 66q-14 2-18-12l-42-140zM1256 700l188-56 38 130-194 54zM1288 816q50-80 70-80l88 46M1396 750q30-40 84 8M1340 644l60-44 36 24M1480 690l30 40-14 20M1290 850l50 34 70-60M1232 740l-6 28 26 26"/><ellipse cx="1424" cy="688" rx="18" ry="18"/>
          <path d="M1098 966l100-80q40-16 60-14 0 20-20 50l-100 90q-40-20-40-46zM1200 886l40 40M1120 960l30 40M1284 960q4-40 50-36 60 10 60 60M1370 946q0-20 16-24v20zM640 1010l-4-40q0-20 20-22l320 24q60 14 80 40M658 1010v-26l300 24M420 930q20-30 34-10 30-40 44 0-4 50-34 58-50-14-44-48zM238 1010l-10-110 158-12-8 122M256 940h86M256 970h70M512 1010q30-40 70-30l14 30"/>
          <path d="M1480 180q-10-40 30-30 0-60 56-50M1476 210q20 10 34 0-20 50 20 58"/>
          <polyline class="dots-s" points="440,298 384,288 216,46 514,76 966,284 1008,268 964,376 1052,236 834,418 706,346 1398,306 1428,230 834,614 846,690 650,646 1010,574 62,474 60,432 18,504 204,504 158,736 160,684 650,902 1114,850 1196,836 1120,896 1508,34 1504,992 1540,350 1496,384 1518,590"/>
          <polyline class="dots-m" points="308,230 228,402 456,452 502,264 682,388 748,356 814,306 888,466 1054,384 986,326 458,524 624,566 718,654 748,750 732,902 652,768 876,658 1408,98 812,68 200,666 1472,934 796,356"/>
          <polyline class="dots-l" points="332,316 440,370 240,450 1446,58 1424,162 1504,318 986,534 710,710 218,734 418,842 1168,750 1150,810 1524,908 1106,240"/>
          <polyline class="stars" points="148,446 232,574 1096,324 300,826 1174,660"/><path d="M906 524l14 34 34 2-26 26 6 38-30-18-32 16 8-40-26-24 36-4z"/><polyline class="sparks" points="260,128 522,174"/><polyline class="drops" points="624,94 552,636 506,812 606,818 562,890"/><polyline class="hearts" points="724,816"/>
          <path d="M862 356l10-70 48 14-12 42 26 6-46 56 4-38z"/>
        </g>
        <!-- bottom left: laptop, dinosaur, fruit, clock -->
        <g transform="translate(0 1130) scale(.3954 .3333)">
          <path d="M0 30l250 20q34 10 34 40l-20 274M0 56l250 36q14 0 12 20l-20 210q-4 12-20 10L0 304M0 340l40 8v12l104 12 14-16 150 20q16 0 10 14-6 30-34 30L0 382"/><ellipse cx="102" cy="190" rx="66" ry="84"/><path d="M34 212q-20-90 66-100 54 10 60 80-10 80-60 76-20 0-46-14l-30 10zM72 164q10-20 20 0l-4 26 20 22q20-10 20 4-4 20-20 12-40-20-36-64z"/>
          <path d="M406 288l-24-4q-80-20-64-90 20-60 100-60 110 10 120 130l-16 140q10 50 40 40l60-14q14 0 4 20-50 80-120 64-60 30-100 0-30-40-10-60 20-20 52 0M406 288q0 40-30 40-20-20-46 0-10 20 20 44l24 4q-24 40-10 70M408 380q-10-40 30-40l54 30M408 370q14 20 40 10M360 440q-50 0-40 40 10 40 70 32M344 236q10-10 44 10-10 20-24 20-16-10-20-30M440 136l22-22 16 40 26-10 6 30 24-10v30l20 12-12 22 18 20-18 18 14 26-18 14 14 26-18 16 14 28-20 14 14 30-14 12 20 20M460 210q14-4 20 10M500 416v1"/>
          <path d="M320 60q0-20 40-50M330 44l30 30M340 90q-30-4-24-40M340 90q20 0 70-70M470 60q-4-40 10-46M470 60q20 54 60 54 50-14 48-60-6-30-26-36M728 66l8-40M728 66l60-30"/>
          <path d="M642 184l44-50 70-24 50-38q10 0 12 8l54 150q0 16-90 88l-70 10zM706 304l140-140M712 324l90-100 50 20M700 160l12 30M764 110l6 20M776 130l8 20M790 180l10 20M720 210l8 20M732 240l10 16M764 222q-30-20-20-40 20-16 30 0 2 24-10 40M806 206l50 50"/>
          <path d="M806 440q10-20 10-30-20-20-8-50l20-20q14-46 50-50 50 4 50 64 30 30 20 60l-4 20q-10 4-16-20l-90 6q-10 30-24 26zM830 360q4-54 50-56 36 4 40 54z"/><ellipse cx="832" cy="390" rx="11" ry="14"/><ellipse cx="924" cy="376" rx="11" ry="14"/>
          <path d="M950 184q20-10 44-20l4-20q10-8 14 0l6 18 40-10q12 6 4 16l-36 14-4 30 2 40 30 20q0 14-16 10l-20-24-30 50q-14 4-10-10l26-56-16-34q0-14 14-10l14-24-50 24q-14 0-16-14zM1056 342l24-110q14-26 36 0l36 90q-4 14-18 10l-14-24h-28l-18 34q-10 14-18 0zM1090 286l10-30 14 26z"/>
          <path d="M1130 70v30q4 12 36 12l6 40 44-44 96-4q14-2 14-20v-24"/>
          <path d="M1306 232q-50-50-34-84 20-16 32 6 26-34 38-6 0 40-36 84zM1306 232q44-60 68-46 10 30-20 46 34 10 20 24-30 10-68-24zM1306 232q40 50 20 70-20-8-20-20zM1306 232q-10-30-50-40-20 10-2 30-20 20 10 28 20 0 42-18l-50 70M1456 230q-10-60 24-80M1452 140l10-70q12-24 28 30l60-10M1480 60q70-40 90 30M1488 60q50 10 48 60-10 60-50-10zM1452 140q20 60 26 80M1460 240q4-14 20-14l76 10M1460 240v30q0 14 96 20"/>
          <ellipse cx="1094" cy="560" rx="94" ry="110"/><path d="M1096 530q-20-60 0-60 20 0 0 60M1110 540q20-50 36-40 10 20-36 40M1116 556q50-20 56 0-6 20-56 0M1114 576q40 10 30 30-16 6-30-30M1098 590q20 60 0 60-20-4 0-60M1080 578q-20 40-36 30-6-20 36-30M1072 560q-50 10-52-8 10-16 52 8M1080 540q-40-20-30-38 20-4 30 38"/>
          <path d="M1258 420q0-10 210-78 20 0 24 14l10 80q0 14-10 18l-190 74q-14 2-20-10l-22-80zM1310 528l170-56q10 10 0 20l-160 54q-14-4-10-18M1284 436l30-10M1290 444l8 46 28-12-8-46M1332 420l30-10 6 30-24 8-6-24M1368 440l6 26-26 10M1376 430v1M1382 444v1M1400 400l26-10 6 24-22 12 4 28 28-10M1444 384l22-8 12 60-26 8zM1446 410l26-8M1216 360q20-10 30 20l-4 8q-20-6-26-28M1200 396q16-6 34 6v8l-34-6zM1200 432l30-2M1200 442l30-2M1430 346l18-10"/>
          <ellipse cx="906" cy="540" rx="62" ry="74"/><path d="M886 508l46 22q4 8 0 14l-32 34q-8 0-10-8z"/>
          <path d="M622 700q-10-130 90-144 100 10 110 140-10 80-60 92-120 10-140-88zM640 690q-10-80 50-60l20 14q24-40 70-30 30 60-4 92l-10 50q-30 50-80 10l-8-40q-30-10-38-36zM622 610q-20-20-30 0-20 60 0 110l30 10M776 570q20-30 44 10 30 70 10 90l-20 4zM820 670l40 100q10 20-20 20l-20-100M604 800l-2-70M706 740q30 0 44-14-4 34-26 34-16-2-18-20"/><ellipse cx="678" cy="680" rx="10" ry="14"/><ellipse cx="750" cy="658" rx="10" ry="14"/>
          <path d="M684 400q10-20 26-10 14 20 0 66-14 20-26 4-10-10 0-60zM656 440q10 50 50 40 20-20 24-46M652 450q10 40 34 44v20M686 492q20 4 34-12"/>
          <path d="M24 424l40 2v44l-42-4zM110 430l38 4-2 46-40-4zM62 476l40 6M40 496l24 4v-20M40 496l-2 60 18 4 4-20 34 6 0 22 20 2 4-64-18-4v-20M186 444l46 20-24 48-14-20q-20 20-20 50 10 44 44 44 44-10 34-60l4-12q10-10 14 4 4 70-52 80-60-8-60-80 8-30 34-44z"/>
          <path d="M0 664l136-24q12 0 14 10l8 90q0 10-12 14L0 778M0 694l90-20q14 4 4 14l-90 20M0 730l90-20q10 6 0 14l-80 20M0 806l236-28q10 0 14 30M318 702q0-10 120 20 10 4 4 16l-26 70M318 702l66 104M380 760q10-30 50 6"/>
          <path d="M520 740a10 10 0 1 0 4 6l-6-30 36-30v48a10 10 0 1 0 4 6l-4-54"/>
          <path d="M934 800q0-20 10-24l150-40M950 806q0-20 140-60M1094 736l120-60q10 4 6 10l30 4 10 100M1094 736l14 72M1120 760l14 24 10-20 8 14 6-28M1166 750l60-12M1176 778l50-10M1216 596l30-26q10 0 126 200-6 14-18 14zM1240 590q10-10 56 44-10 14-24 10l-30-50M1400 620q20-50 60-62 30-6 44 10l28 50q10 60-30 80-60 30-96-80zM1480 560q0-20 20-14M1500 544q20-30 34-10l0 80M1390 650q-24 40-10 60 40 20 70 0M1410 660l30 60M1390 806q0-30 50-30l20-30 30 10 8 20 20 0"/>
          <polyline class="dots-s" points="594,190 624,216 354,186 380,192 666,60 846,64 770,366 318,560 386,620 506,426 526,462 476,456 932,244 990,360 982,458 970,624 940,714 1016,704 1142,384 1290,340 1214,490 1220,222 1414,248 1362,54 1380,104 1376,560 1412,560 1342,658 1290,586 1530,410 1526,466 1550,742 50,608 216,726 492,570 610,544 1162,228"/>
          <polyline class="dots-m" points="430,68 896,50 620,254 304,518 260,648 308,640 768,444 804,490 996,418 1036,412 934,656 900,690 1112,162 1224,174 260,736 316,772 1518,342"/>
          <polyline class="dots-l" points="762,504 366,572 350,644 204,664 546,584 1182,278 1084,394 1102,96 978,692 1416,156 1388,312 1244,534 1350,608"/>
          <polyline class="stars" points="468,640"/><polyline class="sparks" points="616,110 908,118"/><polyline class="hearts" points="632,348"/>
        </g>
      </g>
    </defs>
    <use href="#tile"/>
    <use href="#tile" x="-945"/>
    <use href="#tile" x="945"/>
  </svg>

  <time class="day" datetime="2023-08-21">2023-08-21</time>

  <ol class="messages">
    <li class="msg in full"><p>Ako vam ne odgovara izadjite</p><div class="meta"><time>5:26 p.m.</time></div></li>
    <li class="msg in"><p>KRAJ PRICE<span class="gap"></span></p><div class="meta"><time>5:26 p.m.</time></div></li>
    <li class="msg out first full"><p>"onda ste odbili da placete racune vezanu za vasu potrosnju struje, vode, internet, komunalije, itd" -<br>nisam odbio neko sam pitao da li mozemo da se nagodimo da vi placate to, i vi ste sami rekli da<br>cete pokriti do 3,000 dinara struju a ako predjemo preko toga mi placamo razliku. Tako da ovo<br>samo izmisljate da sam ja "odbio" da placam racune</p><div class="meta"><time>5:26 p.m.</time><svg class="ticks" viewBox="0 0 27 17" role="img" aria-label="Read"><path d="m1 10.500 5 5L17.500 1M12 13.500l2 2L26 1"/></svg></div></li>
    <li class="msg in first"><p>Necu odgovoriti jer necu da se prepirem<span class="gap"></span></p><div class="meta"><time>5:26 p.m.</time></div></li>
    <li class="msg in"><p>Moja poruka ne zahteva odgovor.<br>Recite sta ste odlucili</p><div class="meta"><time>5:27 p.m.</time></div></li>
    <li class="msg out first full"><p>"prihvatila sam da predjemo van airbnb da bi vam spustila trosak sto mene uopste ne stiti jer je<br>meni preko airbnb naj sigurnije jer sve placeno odmah" - pa i ovako sve je placeno unapred, cak i<br>vise - depozit + renta (Airbnb ne uzima ceo mesec rente kao depozit, samo da znate, jer ocigledno<br>niste ni tu platformu koristili nesto dugo, izgleda).</p><p>A sve sam vam unapred platio, tako da ne znam sta vam je tu bilo "nesigurno" da i tu sad izmisljate<br>neke gluposti</p><div class="meta"><time>5:27 p.m.</time><svg class="ticks" viewBox="0 0 27 17" role="img" aria-label="Read"><path d="m1 10.500 5 5L17.500 1M12 13.500l2 2L26 1"/></svg></div></li>
    <li class="msg in first"><p>Molim vas prestanite<span class="gap"></span></p><div class="meta"><time>5:28 p.m.</time></div></li>
    <li class="msg in"><p>Nema svrhe<span class="gap"></span></p><div class="meta"><time>5:28 p.m.</time></div></li>
    <li class="msg in"><p>Ne zelim ni sa kim da se svadjam<span class="gap"></span></p><div class="meta"><time>5:28 p.m.</time></div></li>
    <li class="msg in"><p>Ako vam ne odgovara ostavite kljuc i izadjite<span class="gap"></span></p><div class="meta"><time>5:28 p.m.</time></div></li>
    <li class="msg in"><p>Moji uslovi su moja stvar. Ako vam ne odgovara cao zdravo<span class="gap"></span></p><div class="meta"><time>5:29 p.m.</time></div></li>
    <li class="msg out first full last"><p>"hteli ste novi dusek i ako je moj dusek sasvim bio odgovarajuc" - kao sto sam vam pomenuo, vase<br>licne preference nemaju nikakve veze sa realnosti i preferensama drugih ljudi... to sto vi volite<br>duseke tvrde kao drvo, to je vas problem. 99% ljudi koji iznajmljuju stanove, da znaju unapred da je<br>dusek tvrd kao drvo ne bi ga nikad ni iznajmili nego bi gledali negde drugo. Ja sam bio sasvim<br>konkretam sa tim da podelimo trosak toga, jer ja vam garantujem da sledeci gost koga ugostite<br>ovde ce vam se isto na to zaliti, i onaj posle njega, i onaj posle njega...</p></li>
  </ol>
</main>
</body>
</html>
```

FILE: styles.css
```css
* {
  box-sizing: border-box;
}

body {
  margin: 0;
  height: 100vh;
  display: flex;
  flex-direction: column;
  overflow: hidden;
  background: #efeae2;
  color: #111b21;
  font-family: "Open Sans", "Noto Sans", sans-serif;
}

/* Header */
.topbar {
  flex: none;
  display: flex;
  align-items: center;
  height: 99px;
  padding: 0 23px 7px 0;
  background: #f0f2f5;
  border-bottom: 1px solid #e6e8ea;
}

.avatar {
  width: 70px;
  height: 70px;
  margin-left: -66px;
  border-radius: 50%;
  background: #dfe5e7;
}

.contact {
  flex: 1;
  margin: 0 0 0 26px;
  font-size: 26px;
  font-weight: 400;
  line-height: 36px;
}

.call,
.search {
  display: flex;
  align-items: center;
  justify-content: center;
  padding: 0;
  background: none;
  border: 0;
}

.call {
  gap: 15px;
  width: 113px;
  height: 61px;
  border: 1px solid #d1d7db;
  border-radius: 30px;
}

.call-camera {
  width: 34px;
  height: 22px;
  fill: #a5aeb4;
}

.call-arrow {
  width: 18px;
  height: 12px;
  fill: none;
  stroke: #a5aeb4;
  stroke-width: 3;
}

.search {
  width: 48px;
  height: 48px;
  margin-left: 28px;
}

.search svg {
  width: 32px;
  height: 32px;
  fill: none;
  stroke: #54656f;
  stroke-width: 4;
}

/* Conversation */
.chat {
  position: relative;
  flex: 1;
  min-height: 0;
  overflow: hidden;
}

.wallpaper {
  position: absolute;
  top: -99px;
  left: 0;
  width: 100%;
  height: 100vh;
}

.ink {
  fill: none;
  stroke: #f4f0e9;
  stroke-width: 6;
  stroke-linecap: round;
  stroke-linejoin: round;
}

.thick { stroke-width: 9; }

.dots-s, .dots-m, .dots-l, .stars, .sparks, .hearts, .drops { stroke: none; }
.dots-s { marker: url(#s); }
.dots-m { marker: url(#m); }
.dots-l { marker: url(#l); }
.stars { marker: url(#st); }
.sparks { marker: url(#sp); }
.hearts { marker: url(#h); }
.drops { marker: url(#dr); }

.day {
  position: absolute;
  z-index: 1;
  top: 14px;
  left: 50%;
  transform: translateX(-50%);
  padding: 10px 22px;
  border-radius: 13px;
  background: #fff;
  box-shadow: 0 2px 1px rgba(11, 20, 26, .13);
  color: #54656f;
  font-size: 21px;
  line-height: 36px;
}

.messages {
  position: relative;
  display: flex;
  flex-direction: column;
  gap: 3px;
  margin: -35px 0 0;
  padding: 0 17px 0 16px;
  list-style: none;
}

.msg {
  position: relative;
  display: flex;
  flex-direction: column;
  align-self: flex-start;
  max-width: 65%;
  padding: 11px 12px 14px 16px;
  border-radius: 13px;
  background: #fff;
  box-shadow: 0 2px 1px rgba(11, 20, 26, .13);
  font-size: 24px;
  line-height: 33px;
}

.msg.out {
  align-self: flex-end;
  margin-top: 18px;
  background: #d9fdd3;
}

.msg.out + .msg.in {
  margin-top: 18px;
}

.msg.full { width: 65%; }
.msg.in.first { border-top-left-radius: 0; }
.msg.out.first { border-top-right-radius: 0; }
.msg.last { padding-bottom: 80px; }

/* Bubble tails */
.first::before {
  content: "";
  position: absolute;
  top: 0;
  width: 12px;
  height: 20px;
  background: inherit;
}

.in.first::before {
  right: 100%;
  clip-path: polygon(0 0, 100% 0, 100% 100%, 0 3px);
}

.out.first::before {
  left: 100%;
  clip-path: polygon(0 0, 100% 0, 100% 3px, 0 100%);
}

.msg p {
  margin: 0;
  white-space: nowrap;
}

.msg p + p {
  margin-top: 34px;
}

.gap {
  display: inline-block;
  width: 91px;
}

.meta {
  display: flex;
  align-self: flex-end;
  align-items: center;
  gap: 6px;
  height: 22px;
  margin: -15px 0 -7px;
  color: #667781;
  font-size: 18px;
  line-height: 22px;
}

.ticks {
  width: 27px;
  height: 17px;
  fill: none;
  stroke: #53bdeb;
  stroke-width: 3;
}
```
